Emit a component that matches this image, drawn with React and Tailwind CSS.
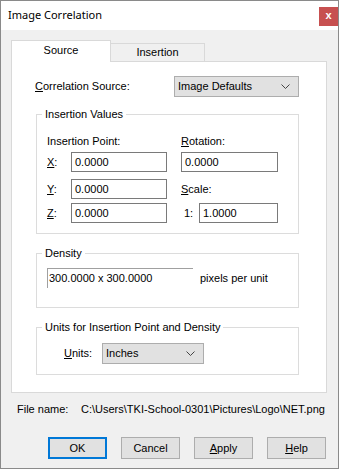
import React from 'react';

const Chevron = ({ className }) => (
    <svg className={className} width="9" height="5" viewBox="0 0 9 5" fill="none">
        <polyline points="0.5,0.5 4.5,4.5 8.5,0.5" stroke="#444" strokeWidth="1" />
    </svg>
);

const Combo = ({ value, width }) => (
    <div className={`${width} h-[21px] flex items-center bg-[#e1e1e1] border border-[#adadad] pl-[3px] pr-[8px]`}>
        <span className="flex-1 leading-[13px]">{value}</span>
        <Chevron />
    </div>
);

const TextBox = ({ value, width }) => (
    <div className={`${width} h-[20px] flex items-center border border-[#7a7a7a] bg-white pl-[3px] leading-[13px]`}>
        {value}
    </div>
);

const Group = ({ title, className, children }) => (
    <fieldset className={`ml-[24px] w-[263px] border border-[#dcdcdc] ${className}`}>
        <legend className="ml-[5px] px-[3px] leading-[13px]">{title}</legend>
        {children}
    </fieldset>
);

const Button = ({ children, primary }) => (
    <button
        type="button"
        className={`w-[59px] h-[22px] flex items-center justify-center bg-[#e1e1e1] leading-[13px] ${
            primary ? 'border-2 border-[#0078d7]' : 'border border-[#adadad]'
        }`}
    >
        {children}
    </button>
);

export default function App() {
    return (
        <div className="w-[339px] h-[469px] border border-[#8a8a8a] flex flex-col text-[11px] text-black font-['Liberation_Sans',Arial,sans-serif]">
            {/* Barra de título */}
            <div className="h-[29px] shrink-0 bg-white flex">
                <div className="pl-[7px] self-center text-[11px] font-['Noto_Sans',sans-serif]">Image Correlation</div>
                <div className="ml-auto mt-[6px] w-[19px] h-[19px] bg-[#c75050] flex items-center justify-center text-white font-bold text-[11px] leading-none pb-[2px]">
                    x
                </div>
            </div>

            <div className="flex-1 bg-[#f0f0f0] flex flex-col pl-[10px] pt-[10px]">
                {/* Pestañas */}
                <div className="flex items-end h-[21px]">
                    <div className="relative z-10 w-[100px] h-[22px] -mb-px bg-white border border-b-0 border-[#d9d9d9] flex justify-center pt-[3px] leading-[13px]">
                        Source
                    </div>
                    <div className="w-[94px] h-[18px] bg-[#f0f0f0] border border-l-0 border-b-0 border-[#d9d9d9] flex justify-center pt-[2px] leading-[13px]">
                        Insertion
                    </div>
                </div>

                {/* Panel */}
                <div className="w-[316px] h-[332px] bg-white border border-[#d9d9d9] flex flex-col">
                    <div className="mt-[14px] pl-[23px] flex items-center">
                        <span className="w-[139px] leading-[13px]">
                            <u>C</u>orrelation Source:
                        </span>
                        <Combo value="Image Defaults" width="w-[125px]" />
                    </div>

                    <Group title="Insertion Values" className="mt-[11px] pb-[10px]">
                        <div className="flex pl-[10px]">
                            <div className="w-[134px] flex flex-col">
                                <div className="mt-[14px] leading-[13px]">Insertion Point:</div>
                                <div className="mt-[4px] flex items-center">
                                    <span className="w-[24px] leading-[13px]"><u>X</u>:</span>
                                    <TextBox value="0.0000" width="w-[96px]" />
                                </div>
                                <div className="mt-[7px] flex items-center">
                                    <span className="w-[24px] leading-[13px]"><u>Y</u>:</span>
                                    <TextBox value="0.0000" width="w-[96px]" />
                                </div>
                                <div className="mt-[4px] flex items-center">
                                    <span className="w-[24px] leading-[13px]"><u>Z</u>:</span>
                                    <TextBox value="0.0000" width="w-[96px]" />
                                </div>
                            </div>
                            <div className="flex flex-col">
                                <div className="mt-[14px] leading-[13px]"><u>R</u>otation:</div>
                                <div className="mt-[4px]">
                                    <TextBox value="0.0000" width="w-[97px]" />
                                </div>
                                <div className="mt-[11px] leading-[13px]"><u>S</u>cale:</div>
                                <div className="mt-[7px] flex items-center">
                                    <span className="w-[18px] pl-[3px] leading-[13px]">1:</span>
                                    <TextBox value="1.0000" width="w-[79px]" />
                                </div>
                            </div>
                        </div>
                    </Group>

                    <Group title="Density" className="mt-[13px] pb-[19px]">
                        <div className="mt-[8px] pl-[10px] flex items-center">
                            <div className="w-[146px] h-[20px] border-t border-l border-[#a0a0a0] flex items-center pl-[1px] leading-[13px]">
                                300.0000 x 300.0000
                            </div>
                            <span className="ml-[7px] leading-[13px]">pixels per unit</span>
                        </div>
                    </Group>

                    <Group title="Units for Insertion Point and Density" className="mt-[13px] pb-[10px]">
                        <div className="mt-[9px] pl-[27px] flex items-center">
                            <span className="w-[38px] leading-[13px]"><u>U</u>nits:</span>
                            <Combo value="Inches" width="w-[102px]" />
                        </div>
                    </Group>
                </div>

                {/* Nombre de archivo */}
                <div className="mt-[10px] pl-[6px] flex leading-[13px]">
                    <span className="w-[64px]">File name:</span>
                    <span>C:\Users\TKI-School-0301\Pictures\Logo\NET.png</span>
                </div>

                {/* Botones */}
                <div className="mt-[21px] pl-[37px] flex gap-[14px]">
                    <Button primary>OK</Button>
                    <Button>Cancel</Button>
                    <Button><span><u>A</u>pply</span></Button>
                    <Button><span><u>H</u>elp</span></Button>
                </div>
            </div>
        </div>
    );
}
